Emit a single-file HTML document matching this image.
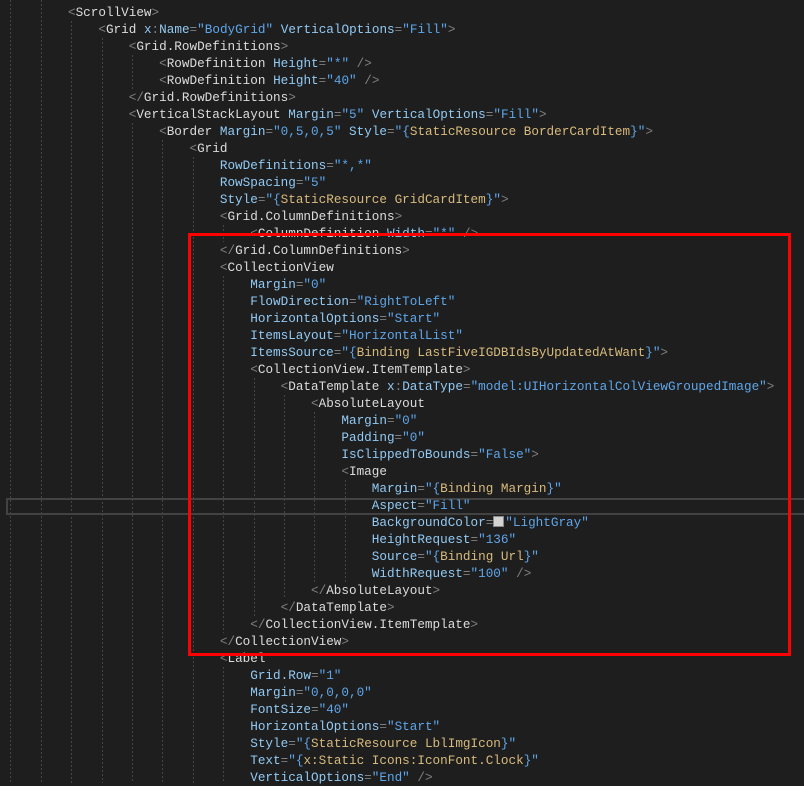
<!DOCTYPE html>
<html><head><meta charset="utf-8"><style>
html,body{margin:0;padding:0;background:#1e1e1e;width:804px;height:783px;overflow:hidden}
#c{position:absolute;left:7.2px;top:4px;font-family:"Liberation Mono",monospace;font-size:12.67px;line-height:17px;white-space:normal;color:#d4d4d4}
.l{height:17px;white-space:pre}
.p{color:#808080}.e{color:#dcdcdc}.a{color:#92caf4}.s{color:#5ea6ea}.m{color:#d7ba7d}
.sw{display:inline-block;width:9px;height:9px;background:#d3d3d3;border:1px solid #888;vertical-align:-1px;margin-right:1px}
#hl{position:absolute;left:6px;top:498px;width:800px;height:17px;border:2px solid #424242;box-sizing:border-box}
#red{position:absolute;left:188px;top:233px;width:603px;height:423px;border:3px solid #ff0000;box-sizing:border-box}
svg{position:absolute;left:0;top:0}
</style></head><body>
<svg width="804" height="783"><g stroke="#454545" stroke-width="1" stroke-dasharray="2 2">
<line x1="10.5" y1="0" x2="10.5" y2="783"/>
<line x1="41.5" y1="0" x2="41.5" y2="783"/>
<line x1="71.5" y1="21" x2="71.5" y2="783"/>
<line x1="102.5" y1="38" x2="102.5" y2="783"/>
<line x1="132.5" y1="55" x2="132.5" y2="89"/>
<line x1="132.5" y1="123" x2="132.5" y2="783"/>
<line x1="162.5" y1="140" x2="162.5" y2="783"/>
<line x1="193.5" y1="157" x2="193.5" y2="783"/>
<line x1="223.5" y1="225" x2="223.5" y2="242"/>
<line x1="223.5" y1="276" x2="223.5" y2="633"/>
<line x1="223.5" y1="667" x2="223.5" y2="783"/>
<line x1="254.5" y1="378" x2="254.5" y2="616"/>
<line x1="284.5" y1="395" x2="284.5" y2="599"/>
<line x1="314.5" y1="412" x2="314.5" y2="582"/>
<line x1="345.5" y1="480" x2="345.5" y2="582"/>
</g></svg>
<div id="hl"></div>
<div id="c"><div class="l">        <span class="p">&lt;</span><span class="e">ScrollView</span><span class="p">&gt;</span></div>
<div class="l">            <span class="p">&lt;</span><span class="e">Grid</span> <span class="a">x</span><span class="p">:</span><span class="a">Name</span><span class="p">=</span><span class="s">"BodyGrid"</span> <span class="a">VerticalOptions</span><span class="p">=</span><span class="s">"Fill"</span><span class="p">&gt;</span></div>
<div class="l">                <span class="p">&lt;</span><span class="e">Grid.RowDefinitions</span><span class="p">&gt;</span></div>
<div class="l">                    <span class="p">&lt;</span><span class="e">RowDefinition</span> <span class="a">Height</span><span class="p">=</span><span class="s">"*"</span> <span class="p">/&gt;</span></div>
<div class="l">                    <span class="p">&lt;</span><span class="e">RowDefinition</span> <span class="a">Height</span><span class="p">=</span><span class="s">"40"</span> <span class="p">/&gt;</span></div>
<div class="l">                <span class="p">&lt;/</span><span class="e">Grid.RowDefinitions</span><span class="p">&gt;</span></div>
<div class="l">                <span class="p">&lt;</span><span class="e">VerticalStackLayout</span> <span class="a">Margin</span><span class="p">=</span><span class="s">"5"</span> <span class="a">VerticalOptions</span><span class="p">=</span><span class="s">"Fill"</span><span class="p">&gt;</span></div>
<div class="l">                    <span class="p">&lt;</span><span class="e">Border</span> <span class="a">Margin</span><span class="p">=</span><span class="s">"0,5,0,5"</span> <span class="a">Style</span><span class="p">=</span><span class="s">"{</span><span class="m">StaticResource BorderCardItem</span><span class="s">}"</span><span class="p">&gt;</span></div>
<div class="l">                        <span class="p">&lt;</span><span class="e">Grid</span></div>
<div class="l">                            <span class="a">RowDefinitions</span><span class="p">=</span><span class="s">"*,*"</span></div>
<div class="l">                            <span class="a">RowSpacing</span><span class="p">=</span><span class="s">"5"</span></div>
<div class="l">                            <span class="a">Style</span><span class="p">=</span><span class="s">"{</span><span class="m">StaticResource GridCardItem</span><span class="s">}"</span><span class="p">&gt;</span></div>
<div class="l">                            <span class="p">&lt;</span><span class="e">Grid.ColumnDefinitions</span><span class="p">&gt;</span></div>
<div class="l">                                <span class="p">&lt;</span><span class="e">ColumnDefinition</span> <span class="a">Width</span><span class="p">=</span><span class="s">"*"</span> <span class="p">/&gt;</span></div>
<div class="l">                            <span class="p">&lt;/</span><span class="e">Grid.ColumnDefinitions</span><span class="p">&gt;</span></div>
<div class="l">                            <span class="p">&lt;</span><span class="e">CollectionView</span></div>
<div class="l">                                <span class="a">Margin</span><span class="p">=</span><span class="s">"0"</span></div>
<div class="l">                                <span class="a">FlowDirection</span><span class="p">=</span><span class="s">"RightToLeft"</span></div>
<div class="l">                                <span class="a">HorizontalOptions</span><span class="p">=</span><span class="s">"Start"</span></div>
<div class="l">                                <span class="a">ItemsLayout</span><span class="p">=</span><span class="s">"HorizontalList"</span></div>
<div class="l">                                <span class="a">ItemsSource</span><span class="p">=</span><span class="s">"{</span><span class="m">Binding LastFiveIGDBIdsByUpdatedAtWant</span><span class="s">}"</span><span class="p">&gt;</span></div>
<div class="l">                                <span class="p">&lt;</span><span class="e">CollectionView.ItemTemplate</span><span class="p">&gt;</span></div>
<div class="l">                                    <span class="p">&lt;</span><span class="e">DataTemplate</span> <span class="a">x</span><span class="p">:</span><span class="a">DataType</span><span class="p">=</span><span class="s">"model:UIHorizontalColViewGroupedImage"</span><span class="p">&gt;</span></div>
<div class="l">                                        <span class="p">&lt;</span><span class="e">AbsoluteLayout</span></div>
<div class="l">                                            <span class="a">Margin</span><span class="p">=</span><span class="s">"0"</span></div>
<div class="l">                                            <span class="a">Padding</span><span class="p">=</span><span class="s">"0"</span></div>
<div class="l">                                            <span class="a">IsClippedToBounds</span><span class="p">=</span><span class="s">"False"</span><span class="p">&gt;</span></div>
<div class="l">                                            <span class="p">&lt;</span><span class="e">Image</span></div>
<div class="l">                                                <span class="a">Margin</span><span class="p">=</span><span class="s">"{</span><span class="m">Binding Margin</span><span class="s">}"</span></div>
<div class="l">                                                <span class="a">Aspect</span><span class="p">=</span><span class="s">"Fill"</span></div>
<div class="l">                                                <span class="a">BackgroundColor</span><span class="p">=</span><span class="sw"></span><span class="s">"LightGray"</span></div>
<div class="l">                                                <span class="a">HeightRequest</span><span class="p">=</span><span class="s">"136"</span></div>
<div class="l">                                                <span class="a">Source</span><span class="p">=</span><span class="s">"{</span><span class="m">Binding Url</span><span class="s">}"</span></div>
<div class="l">                                                <span class="a">WidthRequest</span><span class="p">=</span><span class="s">"100"</span> <span class="p">/&gt;</span></div>
<div class="l">                                        <span class="p">&lt;/</span><span class="e">AbsoluteLayout</span><span class="p">&gt;</span></div>
<div class="l">                                    <span class="p">&lt;/</span><span class="e">DataTemplate</span><span class="p">&gt;</span></div>
<div class="l">                                <span class="p">&lt;/</span><span class="e">CollectionView.ItemTemplate</span><span class="p">&gt;</span></div>
<div class="l">                            <span class="p">&lt;/</span><span class="e">CollectionView</span><span class="p">&gt;</span></div>
<div class="l">                            <span class="p">&lt;</span><span class="e">Label</span></div>
<div class="l">                                <span class="a">Grid.Row</span><span class="p">=</span><span class="s">"1"</span></div>
<div class="l">                                <span class="a">Margin</span><span class="p">=</span><span class="s">"0,0,0,0"</span></div>
<div class="l">                                <span class="a">FontSize</span><span class="p">=</span><span class="s">"40"</span></div>
<div class="l">                                <span class="a">HorizontalOptions</span><span class="p">=</span><span class="s">"Start"</span></div>
<div class="l">                                <span class="a">Style</span><span class="p">=</span><span class="s">"{</span><span class="m">StaticResource LblImgIcon</span><span class="s">}"</span></div>
<div class="l">                                <span class="a">Text</span><span class="p">=</span><span class="s">"{</span><span class="m">x:Static Icons:IconFont.Clock</span><span class="s">}"</span></div>
<div class="l">                                <span class="a">VerticalOptions</span><span class="p">=</span><span class="s">"End"</span> <span class="p">/&gt;</span></div></div>
<div id="red"></div>
</body></html>
